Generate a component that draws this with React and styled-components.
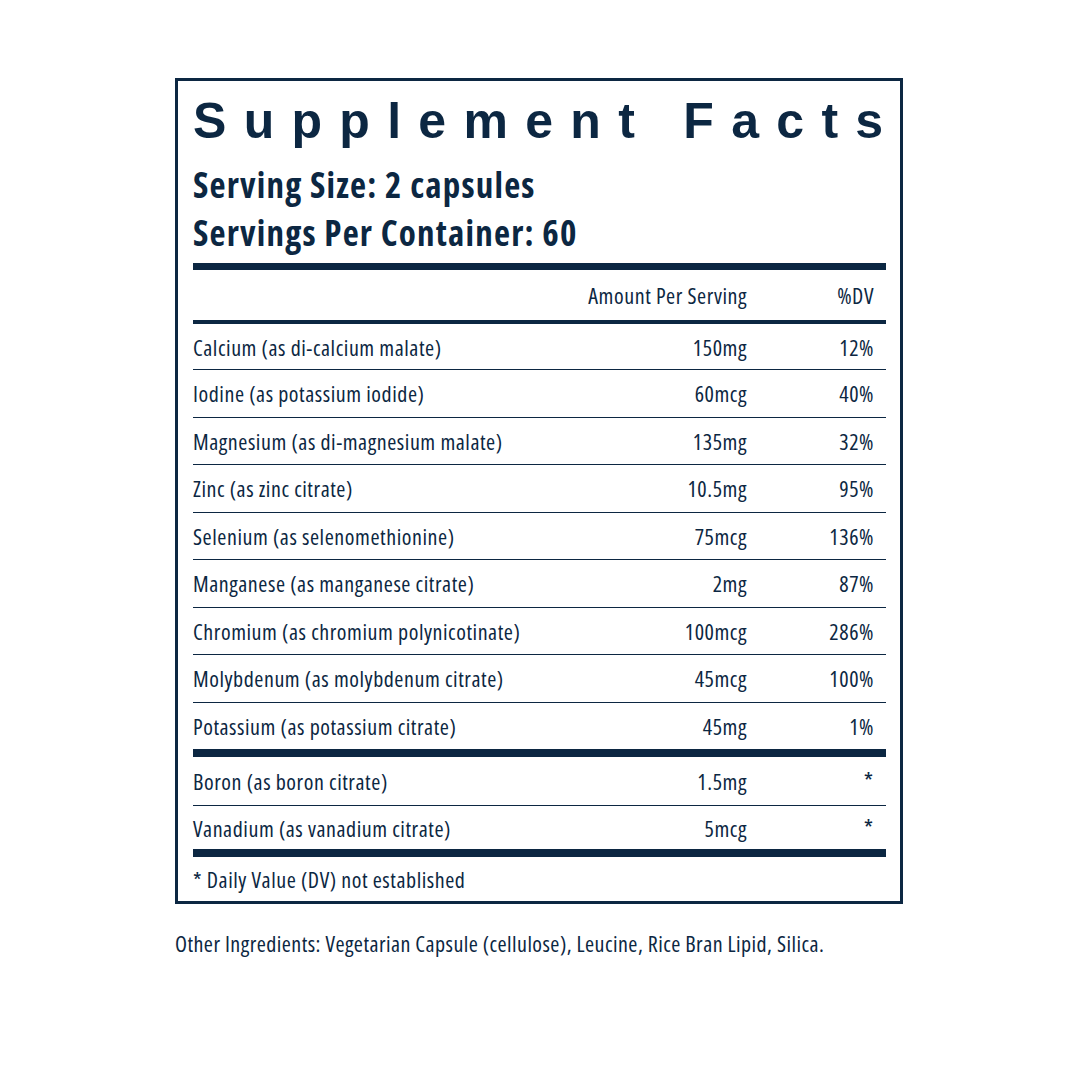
import React from "react";
import styled, { createGlobalStyle } from "styled-components";

const navy = "#0c2742";

const GlobalStyle = createGlobalStyle`
  body {
    margin: 0;
    background: #ffffff;
    color: ${navy};
    font-family: "Open Sans", "DejaVu Sans", sans-serif;
    font-stretch: 75%;
  }
`;

const Page = styled.div`
  padding: 78px 0 0 175px;
`;

const Panel = styled.section`
  width: 728px;
  box-sizing: border-box;
  border: 3px solid ${navy};
  padding: 12px 14px 0 15px;
`;

const Title = styled.h1`
  margin: 0;
  font-family: "Liberation Sans", Arial, sans-serif;
  font-stretch: normal;
  font-weight: 700;
  font-size: 50px;
  line-height: 56px;
  letter-spacing: 17.3px;
  white-space: nowrap;
`;

const Serving = styled.div`
  margin-top: 12px;
  font-size: 35px;
  font-weight: 700;
  line-height: 48px;
  letter-spacing: 1.2px;
  white-space: nowrap;
`;

const Bar = styled.div`
  height: ${(p) => p.$h}px;
  background: ${navy};
  margin-top: ${(p) => p.$mt || 0}px;
`;

const Row = styled.div`
  display: grid;
  grid-template-columns: 1fr 160px 127px;
  align-items: center;
  height: ${(p) => p.$h || 46}px;
  padding-right: 12px;
  font-size: 22px;
  letter-spacing: 0.55px;
  line-height: 1;
  border-top: ${(p) => (p.$line ? `1px solid ${navy}` : "none")};
`;

const Cell = styled.span`
  text-align: ${(p) => (p.$right ? "right" : "left")};
  white-space: nowrap;
`;

const Star = styled.span`
  text-align: right;
  font-size: 24px;
  font-weight: 400;
  letter-spacing: 0;
  padding-right: 1px;
`;

const Note = styled.div`
  height: 44px;
  display: flex;
  align-items: center;
  font-size: 22px;
  letter-spacing: 0.55px;
`;

const Other = styled.p`
  margin: 24px 0 0;
  font-size: 22px;
  letter-spacing: 0.45px;
  line-height: 30px;
`;

const main = [
  ["Calcium (as di-calcium malate)", "150mg", "12%"],
  ["Iodine (as potassium iodide)", "60mcg", "40%"],
  ["Magnesium (as di-magnesium malate)", "135mg", "32%"],
  ["Zinc (as zinc citrate)", "10.5mg", "95%"],
  ["Selenium (as selenomethionine)", "75mcg", "136%"],
  ["Manganese (as manganese citrate)", "2mg", "87%"],
  ["Chromium (as chromium polynicotinate)", "100mcg", "286%"],
  ["Molybdenum (as molybdenum citrate)", "45mcg", "100%"],
  ["Potassium (as potassium citrate)", "45mg", "1%"],
];

const extra = [
  ["Boron (as boron citrate)", "1.5mg", 48],
  ["Vanadium (as vanadium citrate)", "5mcg", 43],
];

export default function App() {
  return (
    <Page>
      <GlobalStyle />
      <Panel>
        <Title>Supplement Facts</Title>
        <Serving>
          Serving Size: 2 capsules
          <br />
          Servings Per Container: 60
        </Serving>
        <Bar $h={7} $mt={6} />
        <Row $h={50}>
          <Cell />
          <Cell $right>Amount Per Serving</Cell>
          <Cell $right>%DV</Cell>
        </Row>
        <Bar $h={4} />
        {main.map(([name, amt, dv], i) => (
          <Row key={name} $line={i > 0} $h={i === 0 ? 45 : 46.5}>
            <Cell>{name}</Cell>
            <Cell $right>{amt}</Cell>
            <Cell $right>{dv}</Cell>
          </Row>
        ))}
        <Bar $h={8} />
        {extra.map(([name, amt, h], i) => (
          <Row key={name} $line={i > 0} $h={h}>
            <Cell>{name}</Cell>
            <Cell $right>{amt}</Cell>
            <Star>*</Star>
          </Row>
        ))}
        <Bar $h={8} />
        <Note>* Daily Value (DV) not established</Note>
      </Panel>
      <Other>
        Other Ingredients: Vegetarian Capsule (cellulose), Leucine, Rice Bran Lipid, Silica.
      </Other>
    </Page>
  );
}
